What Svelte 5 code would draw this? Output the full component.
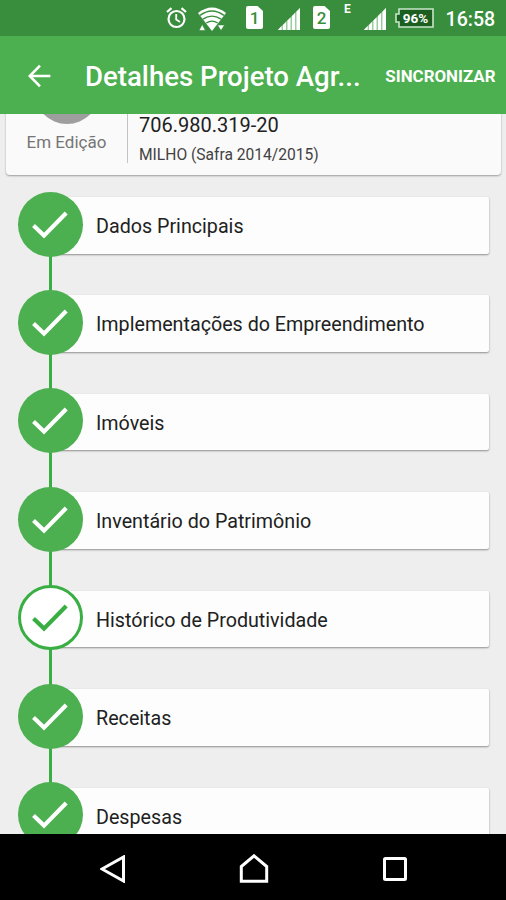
<script>
	let time = '16:58';
	let battery = '96%';

	const project = {
		status: 'Em Edição',
		document: '706.980.319-20',
		crop: 'MILHO (Safra 2014/2015)'
	};

	let steps = [
		{ label: 'Dados Principais', filled: true },
		{ label: 'Implementações do Empreendimento', filled: true },
		{ label: 'Imóveis', filled: true },
		{ label: 'Inventário do Patrimônio', filled: true },
		{ label: 'Histórico de Produtividade', filled: false },
		{ label: 'Receitas', filled: true },
		{ label: 'Despesas', filled: true }
	];
</script>

{#snippet signal()}
	<svg width="22" height="22" viewBox="0 0 22 22">
		<path d="M0 22V21.5L22 0V22Z" fill="#9ccc9e" />
		<path d="M0 22L3.6 18V22ZM5 22V17L8 14V22ZM9.5 22V12.5L12.5 9.5V22ZM14 22V8L17 5V22ZM18.5 22V3.5L22 0V22Z" fill="#fff" />
	</svg>
{/snippet}

{#snippet sim(n)}
	<svg width="17" height="23" viewBox="0 0 17 23">
		<path d="M2 0H11.5L17 5V21Q17 23 15 23H2Q0 23 0 21V2Q0 0 2 0Z" fill="#fff" />
		<text x="8.5" y="18" text-anchor="middle" font-size="17" font-weight="500" fill="#388e3c">{n}</text>
	</svg>
{/snippet}

<div class="screen">
	<div class="status-bar">
		<svg class="alarm" width="21" height="22" viewBox="0 0 21 22" fill="none" stroke="#fff">
			<circle cx="10.5" cy="12" r="8" stroke-width="2.2" />
			<path d="M10.2 7V12.5L14 15" stroke-width="1.8" />
			<path d="M1 5L5.5 1.2M20 5L15.5 1.2" stroke-width="2.2" />
		</svg>
		<svg class="wifi" width="28" height="24" viewBox="0 0 28 24">
			<path d="M0 6Q14 -5 28 6L14 24Z" fill="#fff" />
			<path d="M2 8.4Q14 -.5 26 8.4M5 12.2Q14 6 23 12.2M8.3 16Q14 12.2 19.7 16" fill="none" stroke="#388e3c" stroke-width="1.4" />
			<path d="M1 23.5L4.2 17.5L7.4 23.5ZM19.5 18H26.5L23 23.5Z" fill="#fff" stroke="#388e3c" stroke-width=".6" />
		</svg>
		<span class="sim">{@render sim(1)}</span>
		<span class="signal">{@render signal()}</span>
		<span class="sim second">{@render sim(2)}</span>
		<span class="network">E</span>
		<span class="signal second">{@render signal()}</span>
		<svg class="battery" width="39" height="20" viewBox="0 0 39 20">
			<path d="M4 1H38V19H4V14H1V6H4Z" fill="#1b5e20" stroke="#c8e6c9" stroke-width="1.6" />
			<text x="20.5" y="14.8" text-anchor="middle" font-size="13.5" font-weight="700" fill="#fff">{battery}</text>
		</svg>
		<span class="time">{time}</span>
	</div>

	<header>
		<button class="back" aria-label="Voltar">
			<svg width="24" height="24" viewBox="0 0 24 24" fill="none" stroke="#fff" stroke-width="2.6">
				<path d="M23.4 12H3M13 1.6L2.8 12L13 22.4" />
			</svg>
		</button>
		<h1>Detalhes Projeto Agr...</h1>
		<button class="sync">SINCRONIZAR</button>
	</header>

	<main>
		<section class="summary">
			<div class="state">
				<div class="avatar"></div>
				<span>{project.status}</span>
			</div>
			<div class="info">
				<p class="document">{project.document}</p>
				<p class="crop">{project.crop}</p>
			</div>
		</section>

		<ul class="steps">
			{#each steps as step}
				<li>
					<div class="marker" class:outline={!step.filled}>
						<svg width="36" height="28" viewBox="0 0 36 28" fill="none" stroke="currentColor" stroke-width="4.2">
							<path d="M1.5 14.6L12 24.6L34.2 2" />
						</svg>
					</div>
					<div class="card">{step.label}</div>
				</li>
			{/each}
		</ul>
	</main>

	<nav>
		<svg width="26" height="28" viewBox="0 0 26 28">
			<path d="M2 14L23.5 2V26Z" />
		</svg>
		<svg width="30" height="30" viewBox="0 0 30 30">
			<path d="M2.3 27.2V12.5L15 1.8L27.7 12.5V27.2Z" />
		</svg>
		<svg width="26" height="26" viewBox="0 0 26 26">
			<rect x="2.5" y="2.5" width="21" height="21" rx="1" />
		</svg>
	</nav>
</div>

<style>
	:global(body) {
		margin: 0;
	}

	.screen {
		display: flex;
		flex-direction: column;
		width: 506px;
		height: 900px;
		overflow: hidden;
		background: #eee;
		color: #212121;
		font-family: Roboto, 'Liberation Sans', sans-serif;
	}

	svg {
		display: block;
		flex: none;
	}

	.status-bar {
		display: flex;
		align-items: flex-start;
		box-sizing: border-box;
		flex: none;
		height: 36px;
		padding: 7px 0 0 166px;
		background: #388e3c;
		color: #fff;
	}
	.wifi {
		margin-left: 11px;
	}
	.sim {
		margin: -1px 0 0 20px;
	}
	.sim.second {
		margin-left: 13px;
	}
	.signal {
		margin: 1px 0 0 15px;
	}
	.network {
		width: 7px;
		margin: -5px 0 0 14px;
		font-size: 12px;
		font-weight: 700;
		line-height: 14px;
	}
	.signal.second {
		margin-left: 13px;
	}
	.battery {
		margin: 1px 0 0 9px;
	}
	.time {
		margin: 0 0 0 11.5px;
		font-size: 19.6px;
		font-weight: 500;
		line-height: 25px;
	}

	header {
		display: flex;
		align-items: center;
		box-sizing: border-box;
		flex: none;
		height: 78px;
		padding: 1px 10.5px 0 27px;
		background: #4caf50;
		color: #fff;
	}
	button {
		padding: 0;
		border: none;
		background: none;
		color: inherit;
		font-family: inherit;
	}
	h1 {
		flex: 1;
		margin: 2px 0 0 34px;
		font-size: 27.6px;
		font-weight: 500;
		white-space: nowrap;
	}
	.sync {
		font-size: 16.9px;
		font-weight: 700;
	}

	main {
		flex: 1;
		min-height: 0;
		overflow: hidden;
	}

	.summary {
		display: flex;
		align-items: flex-end;
		box-sizing: border-box;
		height: 120.5px;
		margin: -60px 5px 0 6px;
		padding-bottom: 12px;
		border-radius: 4px;
		background: #fafafa;
		box-shadow: 0 1px 2px rgba(0, 0, 0, 0.35);
	}
	.state {
		display: flex;
		flex-direction: column;
		align-items: center;
		width: 121px;
		height: 105px;
		border-right: 1px solid #c4c4c4;
		color: #757575;
		font-size: 17px;
	}
	.avatar {
		width: 66px;
		height: 66px;
		margin-bottom: 8px;
		border-radius: 50%;
		background: #9e9e9e;
	}
	.info {
		margin-bottom: -4px;
		padding-left: 11px;
	}
	.info p {
		margin: 0;
	}
	.document {
		font-size: 20px;
		line-height: 20px;
	}
	.info .crop {
		margin: 8px 0 0;
		color: #424242;
		font-size: 15.6px;
		line-height: 24px;
	}

	.steps {
		margin: 17px 0 0;
		padding: 0;
		list-style: none;
	}
	li {
		position: relative;
		display: flex;
		align-items: flex-start;
		height: 98.45px;
		padding-left: 18px;
	}
	/* line down to the next marker */
	li::before {
		content: '';
		position: absolute;
		top: 60px;
		bottom: -5px;
		left: 49px;
		width: 3px;
		background: #39ae43;
	}
	.marker {
		position: relative;
		z-index: 1;
		display: flex;
		align-items: center;
		justify-content: center;
		box-sizing: border-box;
		flex: none;
		width: 65px;
		height: 65px;
		border-radius: 50%;
		background: #4caf50;
		color: #fff;
	}
	.marker svg {
		margin: 1px 1px 0 0;
	}
	.marker.outline {
		border: 3px solid #39ae43;
		background: #fff;
		color: #39ae43;
	}
	.card {
		flex: 1;
		height: 56.5px;
		margin: 5.5px 17px 0 -33px;
		padding-left: 46px;
		border-radius: 2px;
		background: #fdfdfd;
		box-shadow: 0 1px 2px rgba(0, 0, 0, 0.4);
		font-size: 19.7px;
		line-height: 59.5px;
	}

	nav {
		display: flex;
		align-items: center;
		justify-content: space-between;
		box-sizing: border-box;
		flex: none;
		height: 66.5px;
		padding: 4px 98px 0 100px;
		background: #000;
	}
	nav svg {
		fill: none;
		stroke: #fff;
		stroke-width: 3;
	}
</style>
